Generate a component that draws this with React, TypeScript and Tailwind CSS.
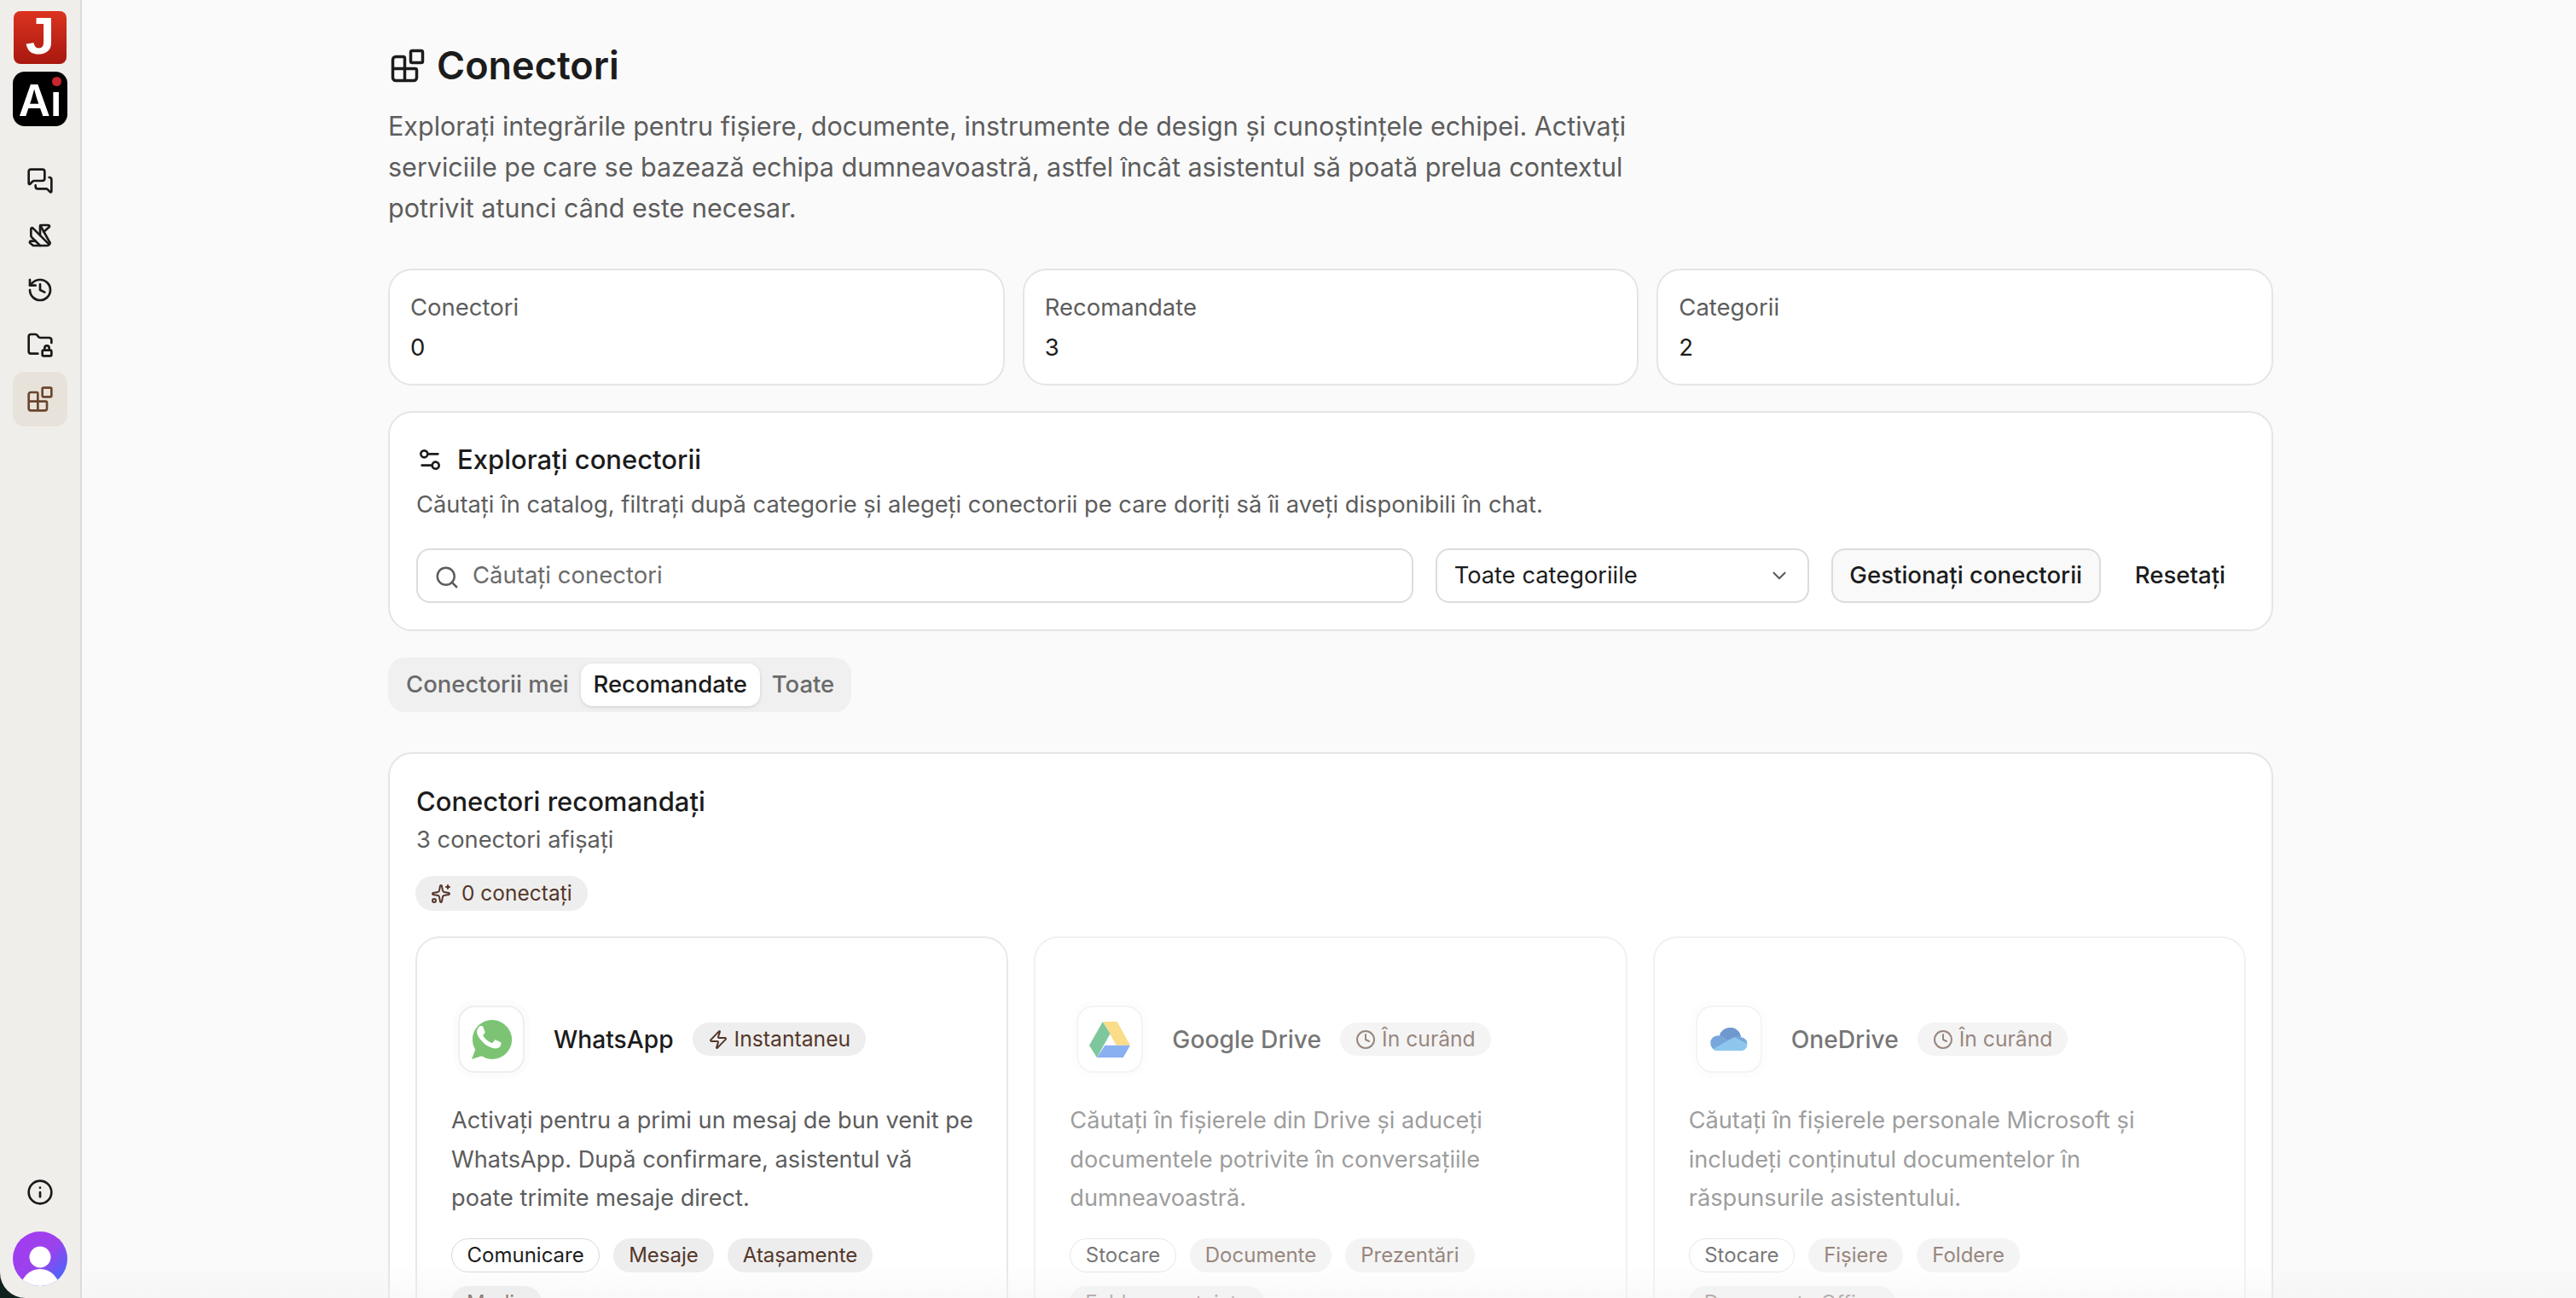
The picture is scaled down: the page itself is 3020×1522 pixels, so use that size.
import React from "react";
import { MessagesSquare, Origami, History, FolderLock, Blocks, Info, Settings2, Search, ChevronDown, Sparkles, Zap, Clock } from "lucide-react";

function WhatsAppLogo() {
  return (
    <svg viewBox="0 0 48 48" className="h-[48px] w-[48px]">
      <path d="M25 1C12.300 1 2 11.300 2 24c0 4.300 1.200 8.300 3.200 11.800L1 47l11.600-3.700A23 23 0 1 0 25 1z" fill="#7cc474" />
      <g transform="translate(-7 -7) scale(2.350)">
        <path
          d="M17.472 14.382c-.297-.149-1.758-.867-2.030-.967-.273-.099-.471-.148-.670.150-.197.297-.767.966-.940 1.164-.173.199-.347.223-.644.075-.297-.150-1.255-.463-2.390-1.475-.883-.788-1.480-1.761-1.653-2.059-.173-.297-.018-.458.130-.606.134-.133.298-.347.446-.520.149-.174.198-.298.298-.497.099-.198.050-.371-.025-.520-.075-.149-.669-1.612-.916-2.207-.242-.579-.487-.500-.669-.510-.173-.008-.371-.010-.570-.010-.198 0-.520.074-.792.372-.272.297-1.040 1.016-1.040 2.479 0 1.462 1.065 2.875 1.213 3.074.149.198 2.096 3.200 5.077 4.487.709.306 1.262.489 1.694.625.712.227 1.360.195 1.871.118.571-.085 1.758-.719 2.006-1.413.248-.694.248-1.289.173-1.413-.074-.124-.272-.198-.570-.347z"
          fill="#fff"
        />
      </g>
    </svg>
  );
}

function DriveLogo() {
  return (
    <svg viewBox="0 0 47 41" className="h-[42px] w-[48px]">
      <polygon points="16,0 32,0 47,27 31,27" fill="#f9c63a" />
      <polygon points="15.500,0 24,14 8.700,41 0,27" fill="#2aa35c" />
      <polygon points="18,27 47,27 39,41 8.700,41" fill="#3f7de8" />
    </svg>
  );
}

function OneDriveLogo() {
  return (
    <svg viewBox="0 0 128 79" className="h-[27px] w-[44px]">
      <defs>
        <clipPath id="odc">
          <circle cx="26" cy="53" r="26" />
          <circle cx="68" cy="38" r="38" />
          <circle cx="104" cy="56" r="23" />
          <rect x="26" y="50" width="78" height="29" />
        </clipPath>
      </defs>
      <g clipPath="url(#odc)">
        <rect x="0" y="0" width="128" height="79" fill="#1c6cc6" />
        <polygon points="25,0 25,20 62,42 100,27 110,0" fill="#1155af" />
        <polygon points="6,79 12,72 82,32 128,56 128,79" fill="#44a2e4" />
      </g>
    </svg>
  );
}

function Avatar() {
  return (
    <svg viewBox="0 0 64 64" className="block h-[64px] w-[64px]">
      <defs>
        <linearGradient id="av" x1="0.1" y1="0.1" x2="0.9" y2="0.85">
          <stop offset="0" stopColor="#a23cf0" />
          <stop offset="0.55" stopColor="#9b42ec" />
          <stop offset="1" stopColor="#4a66f8" />
        </linearGradient>
        <clipPath id="avc"><circle cx="32" cy="32" r="32" /></clipPath>
      </defs>
      <circle cx="32" cy="32" r="32" fill="url(#av)" />
      <circle cx="32" cy="30" r="12.500" fill="#fff" />
      <g clipPath="url(#avc)"><ellipse cx="32" cy="68" rx="23" ry="24" fill="#fff" /></g>
    </svg>
  );
}

function Card({ logo, name, badge, soon, desc, tags }: { logo: React.ReactNode; name: string; badge: string; soon?: boolean; desc: string; tags: string[] }) {
  return (
    <div className={`h-[520px] rounded-[28px] border-2 border-[#e8e8e8] bg-white pl-[40px] pr-[24px] pt-[79px] ${soon ? "opacity-60" : ""}`}>
      <div className="flex items-center">
        <div className="ml-[8px] flex h-[79px] w-[78px] items-center justify-center rounded-[20px] border-2 border-[#eeeeee] bg-white shadow-[0_0_0_6px_#fcfcfc]">
          {logo}
        </div>
        <span className="ml-[34px] text-[28.200px] font-medium leading-[40px] text-[#1c1c1c]">{name}</span>
        <span className="ml-[22px] flex h-[39px] items-center gap-[7px] rounded-full bg-[#eeeeee] px-[18px] text-[24.700px] leading-[39px] text-[#54372a]">
          {soon ? <Clock size={24} strokeWidth={2} /> : <Zap size={24} strokeWidth={2} />}
          {badge}
        </span>
      </div>
      <p className="mt-[33px] w-[616px] text-[27.200px] leading-[45.500px] text-[#5d5d5d]">{desc}</p>
      <div className="mt-[24px] flex w-[600px] flex-wrap gap-[16px]">
        {tags.map((t, i) => (
          <span
            key={t}
            className={`flex h-[40px] items-center rounded-full text-[24px] leading-[40px] ${i === 0 ? "border-[1.500px] border-[#d8d8d8] bg-white px-[17.500px] text-[#1c1c1c]" : "bg-[#ededed] px-[18px] text-[#54372a]"}`}
          >
            {t}
          </span>
        ))}
      </div>
    </div>
  );
}

export default function App() {
  return (
    <div className="relative flex h-[1522px] w-[3020px] overflow-hidden bg-[#10221e] font-['Inter','Noto_Sans',sans-serif] text-[#1c1c1c]">
      <aside className="flex h-full w-[96px] shrink-0 flex-col items-center rounded-bl-[30px] border-r-2 border-[#dcdcdc] bg-[#f0eeeb] pb-[14px] pt-[13px]">
        <div className="flex h-[62px] w-[62px] items-center justify-center rounded-[8px] bg-gradient-to-b from-[#dc3320] to-[#a8180f] pb-[4px] font-['Liberation_Sans',sans-serif] text-[62px] font-bold leading-none text-white">
          J
        </div>
        <div className="relative mt-[9px] flex h-[64px] w-[64px] items-end justify-center rounded-[14px] bg-black pb-[5px] text-[51px] font-semibold leading-[50px] text-white">
          Aı
          <span className="absolute right-[7px] top-[6px] h-[11px] w-[11px] rounded-full bg-[#c9252c]" />
        </div>
        <div className="mt-[32px] flex flex-col items-center">
          <div className="flex h-[64px] w-[64px] items-center justify-center text-[#1a1a1a]"><MessagesSquare size={32} strokeWidth={2} /></div>
          <div className="flex h-[64px] w-[64px] items-center justify-center text-[#1a1a1a]"><Origami size={32} strokeWidth={2} /></div>
          <div className="flex h-[64px] w-[64px] items-center justify-center text-[#1a1a1a]"><History size={32} strokeWidth={2} /></div>
          <div className="flex h-[64px] w-[64px] items-center justify-center text-[#1a1a1a]"><FolderLock size={32} strokeWidth={2} /></div>
          <div className="flex h-[64px] w-[64px] items-center justify-center rounded-[14px] bg-[#e8e3da] text-[#6b4530]"><Blocks size={32} strokeWidth={2} /></div>
        </div>
        <div className="mt-auto flex h-[32px] w-[32px] items-center justify-center text-[#1a1a1a]"><Info size={32} strokeWidth={2} /></div>
        <div className="mt-[30px]"><Avatar /></div>
      </aside>

      <main className="min-w-0 flex-1 bg-[#fafafa] pl-[359px] pr-[355px] pt-[51px]">
        <div className="flex h-[52px] items-center">
          <Blocks size={42} strokeWidth={2} className="ml-[2px] text-[#1c1c1c]" />
          <h1 className="ml-[13px] text-[45px] font-semibold leading-[52px] text-[#1c1c1c]">Conectori</h1>
        </div>
        <p className="mt-[21px] w-[1490px] text-[30.500px] leading-[48px] text-[#5d5d5d]">
          Explorați integrările pentru fișiere, documente, instrumente de design și cunoștințele echipei. Activați serviciile pe care se bazează echipa dumneavoastră, astfel încât asistentul să poată prelua contextul potrivit atunci când este necesar.
        </p>

        <div className="mt-[47px] grid grid-cols-3 gap-[21px]">
          {[["Conectori", "0"], ["Recomandate", "3"], ["Categorii", "2"]].map(([l, v]) => (
            <div key={l} className="h-[137px] rounded-[28px] border-2 border-[#e5e5e5] bg-white px-[24px] pt-[20px]">
              <div className="text-[27.500px] leading-[47px] text-[#5d5d5d]">{l}</div>
              <div className="text-[27.500px] leading-[47px] text-[#1c1c1c]">{v}</div>
            </div>
          ))}
        </div>

        <section className="mt-[30px] h-[258px] rounded-[28px] border-2 border-[#e5e5e5] bg-white px-[31px] pt-[32px]">
          <div className="flex h-[46px] items-center">
            <Settings2 size={32} strokeWidth={2} className="text-[#1c1c1c]" />
            <h2 className="ml-[16px] text-[31px] font-medium leading-[46px]">Explorați conectorii</h2>
          </div>
          <p className="mt-[8px] text-[27.300px] leading-[44px] text-[#5d5d5d]">
            Căutați în catalog, filtrați după categorie și alegeți conectorii pe care doriți să îi aveți disponibili în chat.
          </p>
          <div className="mr-[23px] mt-[29px] flex items-center">
            <div className="flex h-[64px] flex-1 items-center rounded-[16px] border-2 border-[#dcdcdc] bg-white pl-[19px]">
              <Search size={30} strokeWidth={2} className="mt-[4px] text-[#5d5d5d]" />
              <span className="ml-[15px] text-[27.500px] text-[#6b6b6b]">Căutați conectori</span>
            </div>
            <div className="ml-[26px] flex h-[64px] w-[438px] items-center justify-between rounded-[16px] border-2 border-[#dcdcdc] bg-white pl-[20px] pr-[20px]">
              <span className="text-[27.300px] text-[#1c1c1c]">Toate categoriile</span>
              <ChevronDown size={26} strokeWidth={2} className="text-[#5d5d5d]" />
            </div>
            <div className="ml-[26px] flex h-[64px] w-[316px] items-center justify-center rounded-[16px] border-2 border-[#dcdcdc] bg-[#f9f9f9] text-[27.600px] font-medium text-[#1c1c1c]">
              Gestionați conectorii
            </div>
            <div className="ml-[40px] text-[27.600px] font-medium text-[#1c1c1c]">Resetați</div>
          </div>
        </section>

        <div className="mt-[31px] flex h-[64px] w-[543px] items-center rounded-[20px] bg-[#f0f0f0] pl-[21px] text-[27.500px] font-medium text-[#6a6a6a]">
          <span>Conectorii mei</span>
          <span className="ml-[14px] flex h-[50px] w-[210px] items-center justify-center rounded-[14px] bg-white text-[#1c1c1c] shadow-[0_1px_4px_rgba(0,0,0,0.14)]">Recomandate</span>
          <span className="ml-[14px]">Toate</span>
        </div>

        <section className="mt-[47px] h-[800px] rounded-[28px] border-2 border-[#e5e5e5] bg-white px-[30px] pt-[34px]">
          <h2 className="ml-[1px] text-[31px] font-medium leading-[44px]">Conectori recomandați</h2>
          <p className="ml-[1px] mt-[2px] text-[27.300px] leading-[42px] text-[#5d5d5d]">3 conectori afișați</p>
          <div className="mt-[21px] flex h-[41px] w-fit items-center gap-[12px] rounded-full bg-[#eeeeee] px-[18px] text-[24.500px] text-[#54372a]">
            <Sparkles size={24} strokeWidth={2} />
            0 conectați
          </div>
          <div className="mt-[30px] grid grid-cols-3 gap-[30px]">
            <Card
              logo={<WhatsAppLogo />}
              name="WhatsApp"
              badge="Instantaneu"
              desc="Activați pentru a primi un mesaj de bun venit pe WhatsApp. După confirmare, asistentul vă poate trimite mesaje direct."
              tags={["Comunicare", "Mesaje", "Atașamente", "Media"]}
            />
            <Card
              soon
              logo={<DriveLogo />}
              name="Google Drive"
              badge="În curând"
              desc="Căutați în fișierele din Drive și aduceți documentele potrivite în conversațiile dumneavoastră."
              tags={["Stocare", "Documente", "Prezentări", "Foldere partajate"]}
            />
            <Card
              soon
              logo={<OneDriveLogo />}
              name="OneDrive"
              badge="În curând"
              desc="Căutați în fișierele personale Microsoft și includeți conținutul documentelor în răspunsurile asistentului."
              tags={["Stocare", "Fișiere", "Foldere", "Documente Office"]}
            />
          </div>
        </section>
      </main>
      <div className="pointer-events-none absolute bottom-0 left-[96px] right-0 h-[40px] bg-gradient-to-b from-[#f0f0f000] to-[#f0f0f066]" />
    </div>
  );
}
